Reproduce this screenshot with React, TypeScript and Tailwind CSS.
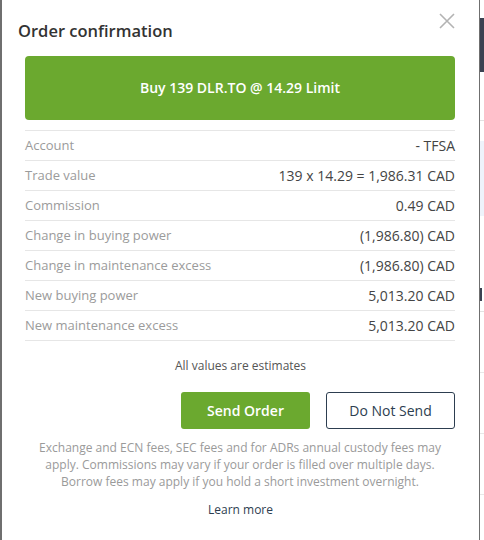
import { JSX } from 'react';

const rows: [string, string][] = [
  ['Account', '- TFSA'],
  ['Trade value', '139 x 14.29 = 1,986.31 CAD'],
  ['Commission', '0.49 CAD'],
  ['Change in buying power', '(1,986.80) CAD'],
  ['Change in maintenance excess', '(1,986.80) CAD'],
  ['New buying power', '5,013.20 CAD'],
  ['New maintenance excess', '5,013.20 CAD'],
];

export default function App(): JSX.Element {
  return (
    <div className="flex h-[540px] w-[484px] overflow-hidden bg-white font-['Open_Sans',sans-serif]">
      {/* Modal */}
      <div className="relative flex h-full w-[480px] shrink-0 flex-col border-l-2 border-r border-[#6f6f6f] bg-white">
        <button className="absolute right-[24px] top-[13px] text-[#b3b3b3]">
          <svg width="16" height="16" viewBox="0 0 16 16" fill="none" stroke="currentColor" strokeWidth="1.6">
            <path d="M1 1L15 15M15 1L1 15" />
          </svg>
        </button>

        <h2 className="mt-[20px] pl-[16px] text-[16.5px] font-semibold leading-[22px] text-[#333]">
          Order confirmation
        </h2>

        <div className="ml-[23px] mt-[14px] flex h-[64px] w-[430px] items-center justify-center rounded-[4px] bg-[#6ba92f] pb-px text-[14px] font-semibold text-white">
          Buy 139 DLR.TO @ 14.29 Limit
        </div>

        {/* Details table */}
        <div className="ml-[23px] mt-[10px] w-[430px] border-t border-[#e6e6e6]">
          {rows.map(([label, value]) => (
            <div
              key={label}
              className="flex h-[30px] items-center justify-between border-b border-[#e6e6e6]"
            >
              <span className="text-[13px] text-[#9b9b9b]">{label}</span>
              <span className="text-[14px] text-[#444]">{value}</span>
            </div>
          ))}
        </div>

        <p className="mt-[16px] text-center text-[12px] leading-[17px] text-[#555]">
          All values are estimates
        </p>

        <div className="ml-[23px] mt-[18px] flex w-[430px] justify-end gap-[16px]">
          <button className="h-[37px] w-[129px] rounded-[3px] bg-[#6ba92f] pb-px text-[14px] font-semibold text-white">
            Send Order
          </button>
          <button className="h-[37px] w-[129px] rounded-[3px] border border-[#2d3e50] bg-white pb-px text-[14px] text-[#2d3e50]">
            Do Not Send
          </button>
        </div>

        <p className="ml-[23px] mt-[10px] w-[430px] text-center text-[12px] leading-[17px] text-[#9a9a9a]">
          Exchange and ECN fees, SEC fees and for ADRs annual custody fees may apply. Commissions may
          vary if your order is filled over multiple days. Borrow fees may apply if you hold a short
          investment overnight.
        </p>

        <p className="mt-[11px] text-center text-[12px] leading-[17px] text-[#2d3e50]">Learn more</p>
      </div>

      {/* Background page peeking through */}
      <div className="flex h-full w-[4px] flex-col bg-white">
        <div className="mt-[18px] h-[54px] bg-[#3b4252]" />
        <div className="mt-[48px] h-px bg-[#e2e2e2]" />
        <div className="mt-[20px] h-[75px] bg-[#eef3fb]" />
        <div className="mt-[72px] h-[13px] w-[2px] bg-[#3b4252]" />
        <div className="mt-[10px] h-px bg-[#e2e2e2]" />
        <div className="mt-[60px] h-px bg-[#e8e8e8]" />
        <div className="mt-[60px] h-px bg-[#e8e8e8]" />
        <div className="mt-[60px] h-px bg-[#e8e8e8]" />
      </div>
    </div>
  );
}
